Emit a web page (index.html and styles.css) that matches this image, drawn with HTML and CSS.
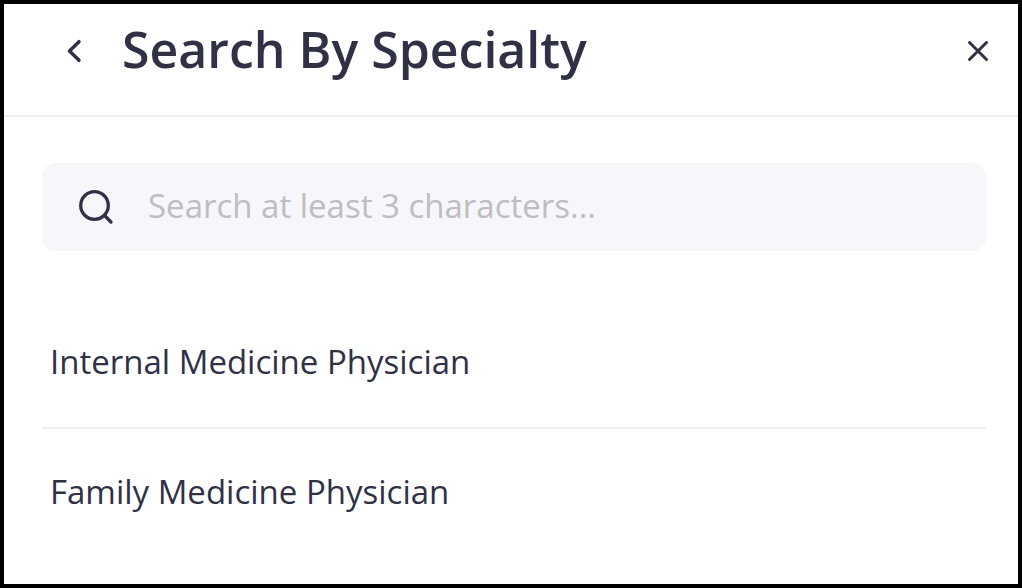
FILE: index.html
```html
<!DOCTYPE html>
<html lang="en">
<head>
<meta charset="utf-8">
<meta name="viewport" content="width=device-width, initial-scale=1">
<title>Search By Specialty</title>
<link rel="stylesheet" href="styles.css">
</head>
<body>
<main class="panel">
  <header class="header">
    <button class="icon-button" type="button" aria-label="Back">
      <svg width="36" height="36" viewBox="0 0 36 36" stroke-width="3.500"><path d="M23 8.700 13.500 18 23 27.300"/></svg>
    </button>
    <h1 class="title">Search By Specialty</h1>
    <button class="icon-button" type="button" aria-label="Close">
      <svg width="36" height="36" viewBox="0 0 36 36" stroke-width="3"><path d="m9.500 9.500 17 17M26.500 9.500l-17 17"/></svg>
    </button>
  </header>
  <div class="content">
    <label class="search">
      <svg width="36" height="36" viewBox="0 0 36 36" stroke-width="3.300" aria-hidden="true"><circle cx="16.500" cy="16.500" r="13.800"/><path d="m26.500 26.500 6.500 6.500"/></svg>
      <input class="search-input" type="text" aria-label="Search specialties" placeholder="Search at least 3 characters...">
    </label>
    <ul class="list">
      <li class="item"><button class="option" type="button">Internal Medicine Physician</button></li>
      <li class="item"><button class="option" type="button">Family Medicine Physician</button></li>
    </ul>
  </div>
</main>
</body>
</html>
```
FILE: styles.css
```css
* { box-sizing: border-box; }
body {
  margin: 0;
  background: #fff;
  color: #313146;
  font-family: "Open Sans", "Noto Sans", sans-serif;
}
.panel {
  min-height: 100vh;
  border: 4px solid #000;
}
.header {
  display: flex;
  align-items: center;
  height: 113px;
  padding: 0 22px 18px 52px;
  border-bottom: 2px solid #ededed;
}
.icon-button {
  display: flex;
  padding: 0;
  border: 0;
  background: none;
  color: inherit;
}
svg {
  flex: none;
  fill: none;
  stroke: currentColor;
  stroke-linecap: round;
  stroke-linejoin: round;
}
.title {
  flex: 1;
  margin: 0;
  padding: 0 0 4px 30px;
  font-size: 50px;
  font-weight: 600;
  line-height: 64px;
}
.content { padding: 46px 32px 0 38px; }
.search {
  display: flex;
  align-items: center;
  gap: 34px;
  height: 88px;
  padding: 0 36px;
  border-radius: 14px;
  background: #f6f6fb;
}
.search-input {
  flex: 1;
  min-width: 0;
  padding: 0 0 2px;
  border: 0;
  outline: 0;
  background: none;
  color: inherit;
  font: inherit;
  font-size: 33px;
  line-height: 44px;
}
.search-input::placeholder { color: #bebec0; opacity: 1; }
.list {
  margin: 48px 0 0;
  padding: 0;
  list-style: none;
}
.item + .item { border-top: 2px solid #ededed; }
.option {
  display: block;
  width: 100%;
  padding: 39px 8px 41px;
  border: 0;
  background: none;
  color: inherit;
  font: inherit;
  font-size: 33px;
  line-height: 48px;
  text-align: left;
}
```
